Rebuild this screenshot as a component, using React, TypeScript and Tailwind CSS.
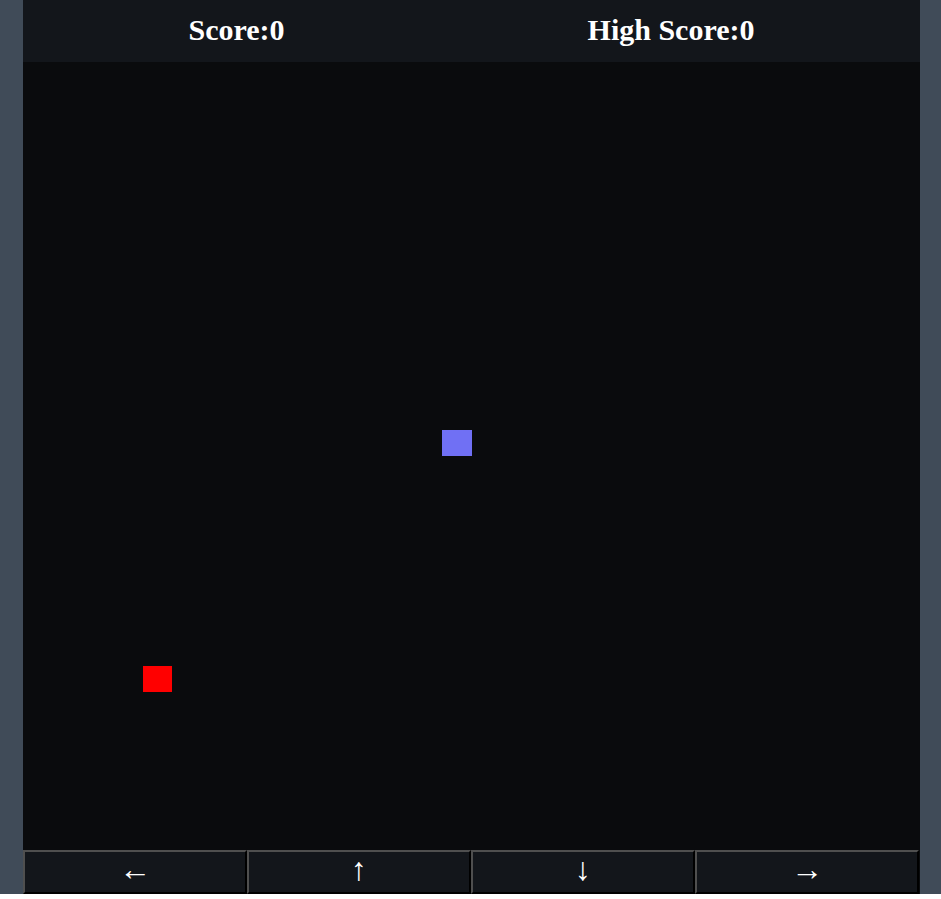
const COLS = 30;
const ROWS = 30;

type Cell = { x: number; y: number };

const snake: Cell[] = [{ x: 14, y: 14 }];
const food: Cell = { x: 4, y: 23 };

function Header({ score, highScore }: { score: number; highScore: number }) {
  return (
    <div className="flex h-[62px] items-center justify-center gap-[303px] bg-[#13161b] pb-[4px] font-['Liberation_Serif',serif] text-[30px] font-bold text-white">
      <h2>Score:{score}</h2>
      <h2>High Score:{highScore}</h2>
    </div>
  );
}

function Board() {
  return (
    <div className="grid h-[788px] grid-cols-[repeat(30,minmax(0,1fr))] grid-rows-[repeat(30,minmax(0,1fr))] bg-[#0a0b0d]">
      {snake.map((c, i) => (
        <div
          key={i}
          className="bg-[#7070f4]"
          style={{ gridColumnStart: c.x + 1, gridRowStart: c.y + 1 }}
        />
      ))}
      <div
        className="bg-[#ff0000]"
        style={{ gridColumnStart: food.x + 1, gridRowStart: food.y + 1 }}
      />
    </div>
  );
}

const arrows = ["←", "↑", "↓", "→"];

function Controls() {
  return (
    <div className="flex bg-[#0a0b0d] pr-[1px]">
      {arrows.map((a) => (
        <button
          key={a}
          className="flex h-[44px] flex-1 items-center justify-center overflow-hidden border-2 border-t-[#4f4f4f] border-l-[#4f4f4f] border-b-black border-r-black bg-[#13161b] pb-[7px] font-['Liberation_Serif',serif] text-[32px] leading-none text-white"
        >
          {a}
        </button>
      ))}
    </div>
  );
}

export default function App() {
  return (
    <div className="bg-[#404b58] px-[21px] pr-[21px]">
      <div className="ml-[2px] w-[897px]">
        <Header score={0} highScore={0} />
        <Board />
        <Controls />
      </div>
    </div>
  );
}
